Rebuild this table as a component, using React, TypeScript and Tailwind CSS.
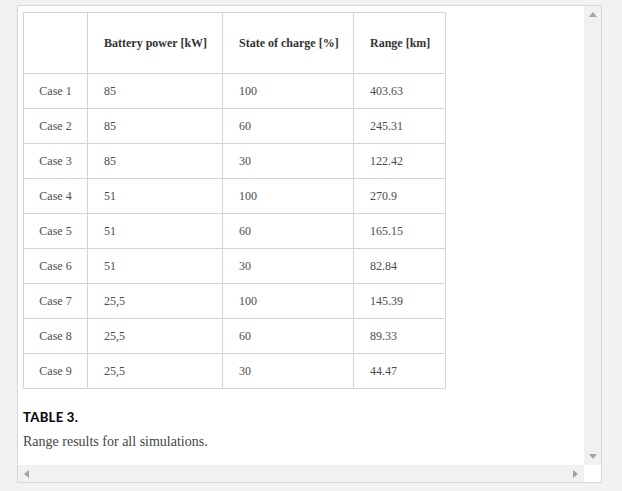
import React from "react";

const rows: [string, string, string, string][] = [
  ["Case 1", "85", "100", "403.63"],
  ["Case 2", "85", "60", "245.31"],
  ["Case 3", "85", "30", "122.42"],
  ["Case 4", "51", "100", "270.9"],
  ["Case 5", "51", "60", "165.15"],
  ["Case 6", "51", "30", "82.84"],
  ["Case 7", "25,5", "100", "145.39"],
  ["Case 8", "25,5", "60", "89.33"],
  ["Case 9", "25,5", "30", "44.47"],
];

export default function App() {
  const serif = { fontFamily: '"Liberation Serif", "Times New Roman", serif' };
  return (
    <div className="w-[622px] h-[491px] bg-[#f2f2f2] pt-[5px] pl-[17px]">
      <div className="w-[585px] h-[478px] border border-[#d6d6d6] bg-white flex flex-col">
        <div className="flex flex-1 min-h-0">
          <div className="flex-1 overflow-hidden pl-[5px] pt-[6px]">
            <table className="table-fixed w-[422px] border-collapse text-[12px] text-[#4d4d4d] whitespace-nowrap" style={serif}>
              <colgroup>
                <col className="w-[64px]" />
                <col className="w-[135px]" />
                <col className="w-[131px]" />
                <col className="w-[92px]" />
              </colgroup>
              <thead>
                <tr className="h-[61px]">
                  <th className="border border-[#d4d4d4]"></th>
                  <th className="border border-[#d4d4d4] px-4 font-bold text-[#333] text-left">Battery power [kW]</th>
                  <th className="border border-[#d4d4d4] px-4 font-bold text-[#333] text-left">State of charge [%]</th>
                  <th className="border border-[#d4d4d4] px-4 font-bold text-[#333] text-left">Range [km]</th>
                </tr>
              </thead>
              <tbody>
                {rows.map((r) => (
                  <tr key={r[0]} className="h-[35px]">
                    <td className="border border-[#d4d4d4] text-center">{r[0]}</td>
                    <td className="border border-[#d4d4d4] px-4">{r[1]}</td>
                    <td className="border border-[#d4d4d4] px-4">{r[2]}</td>
                    <td className="border border-[#d4d4d4] px-4">{r[3]}</td>
                  </tr>
                ))}
              </tbody>
            </table>
            <div
              className="mt-[20px] text-[13px] leading-[16px] font-black text-[#140a14] tracking-[0.3px]"
              style={{ fontFamily: 'Lato, "Open Sans", sans-serif' }}
            >
              TABLE 3.
            </div>
            <div className="mt-[9px] text-[14px] leading-[16px] text-[#444]" style={serif}>
              Range results for all simulations.
            </div>
          </div>
          <div className="w-[17px] bg-[#f1f1f1] flex flex-col items-center justify-between py-[6px]">
            <svg width="8" height="5" viewBox="0 0 8 5"><polygon points="4,0 8,5 0,5" fill="#a3a3a3" /></svg>
            <svg width="8" height="5" viewBox="0 0 8 5"><polygon points="0,0 8,0 4,5" fill="#a3a3a3" /></svg>
          </div>
        </div>
        <div className="h-[17px] flex">
          <div className="flex-1 bg-[#f1f1f1] flex items-center justify-between px-[6px]">
            <svg width="5" height="8" viewBox="0 0 5 8"><polygon points="5,0 5,8 0,4" fill="#a3a3a3" /></svg>
            <svg width="5" height="8" viewBox="0 0 5 8"><polygon points="0,0 5,4 0,8" fill="#a3a3a3" /></svg>
          </div>
          <div className="w-[17px] bg-white"></div>
        </div>
      </div>
    </div>
  );
}
